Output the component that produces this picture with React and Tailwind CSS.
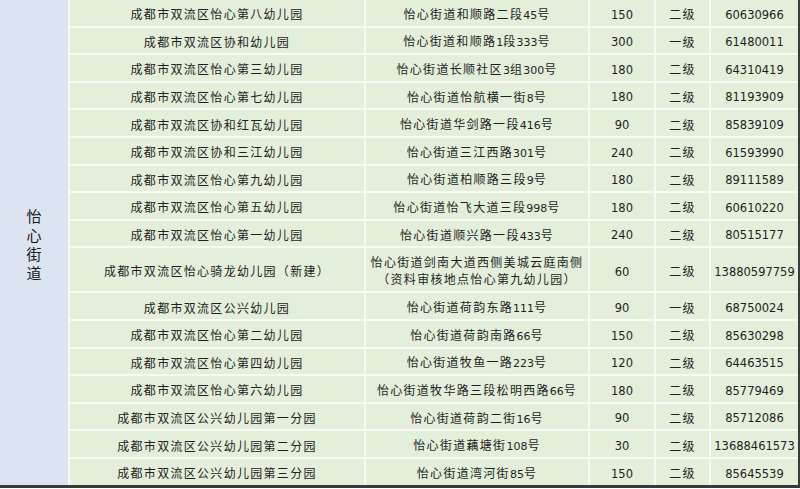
const rows = [
  ["成都市双流区怡心第八幼儿园", "怡心街道和顺路二段45号", "150", "二级", "60630966"],
  ["成都市双流区协和幼儿园", "怡心街道和顺路1段333号", "300", "一级", "61480011"],
  ["成都市双流区怡心第三幼儿园", "怡心街道长顺社区3组300号", "180", "二级", "64310419"],
  ["成都市双流区怡心第七幼儿园", "怡心街道怡航横一街8号", "180", "二级", "81193909"],
  ["成都市双流区协和红瓦幼儿园", "怡心街道华剑路一段416号", "90", "二级", "85839109"],
  ["成都市双流区协和三江幼儿园", "怡心街道三江西路301号", "240", "二级", "61593990"],
  ["成都市双流区怡心第九幼儿园", "怡心街道柏顺路三段9号", "180", "二级", "89111589"],
  ["成都市双流区怡心第五幼儿园", "怡心街道怡飞大道三段998号", "180", "二级", "60610220"],
  ["成都市双流区怡心第一幼儿园", "怡心街道顺兴路一段433号", "240", "二级", "80515177"],
  ["成都市双流区怡心骑龙幼儿园（新建）", "怡心街道剑南大道西侧美城云庭南侧\n（资料审核地点怡心第九幼儿园）", "60", "二级", "13880597759"],
  ["成都市双流区公兴幼儿园", "怡心街道荷韵东路111号", "90", "一级", "68750024"],
  ["成都市双流区怡心第二幼儿园", "怡心街道荷韵南路66号", "150", "二级", "85630298"],
  ["成都市双流区怡心第四幼儿园", "怡心街道牧鱼一路223号", "120", "二级", "64463515"],
  ["成都市双流区怡心第六幼儿园", "怡心街道牧华路三段松明西路66号", "180", "二级", "85779469"],
  ["成都市双流区公兴幼儿园第一分园", "怡心街道荷韵二街16号", "90", "二级", "85712086"],
  ["成都市双流区公兴幼儿园第二分园", "怡心街道藕塘街108号", "30", "二级", "13688461573"],
  ["成都市双流区公兴幼儿园第三分园", "怡心街道湾河街85号", "150", "二级", "85645539"],
];

const font = { fontFamily: '"DejaVu Sans", "Noto Sans CJK SC", sans-serif' };

// digits inside the Chinese text are narrower and unspaced
const Mixed = ({ text }) =>
  text.split(/(\d+)/).map((part, i) =>
    /^\d+$/.test(part) ? (
      <span key={i} className="tracking-normal text-[11px]">{part}</span>
    ) : (
      part
    )
  );

export default function App() {
  return (
    <div className="w-[800px] h-[489px] bg-white overflow-hidden" style={font}>
      <div className="flex bg-[#f7faf4] gap-[2px] border-b-[3px] border-r-2 border-[#3a3a3a]">
        <div className="w-[68px] shrink-0 bg-[#dce3f1] flex items-center justify-center">
          <div className="flex flex-col items-center gap-[4px] text-[15px] leading-none text-[#1a1a1a] pt-[4px]" style={{ fontFamily: '"Noto Sans CJK SC", sans-serif' }}>
            <span>怡</span>
            <span>心</span>
            <span>街</span>
            <span>道</span>
          </div>
        </div>
        <div className="flex-1 flex flex-col gap-[2px] text-[12px] text-[#1f1f1f] tracking-[1.3px]">
          {rows.map((r, i) => (
            <div key={i} className={`flex gap-[2px] ${r[1].includes("\n") ? "h-[43px]" : "h-[25.6px]"}`}>
              <div className="w-[294px] bg-[#e3eedb] flex items-center justify-center pt-[5px]">{r[0]}</div>
              <div className="w-[222px] bg-[#e3eedb] flex items-center justify-center text-center whitespace-pre-line leading-[17px] pt-[5px]">
                <div><Mixed text={r[1]} /></div>
              </div>
              <div className="w-[64px] bg-[#e3eedb] flex items-center justify-center tracking-normal text-[11.5px] pt-[5px]">{r[2]}</div>
              <div className="w-[53px] bg-[#e3eedb] flex items-center justify-center pt-[5px]">{r[3]}</div>
              <div className="flex-1 bg-[#e3eedb] flex items-center justify-center tracking-normal text-[11.5px] pt-[5px]">{r[4]}</div>
            </div>
          ))}
        </div>
      </div>
    </div>
  );
}
